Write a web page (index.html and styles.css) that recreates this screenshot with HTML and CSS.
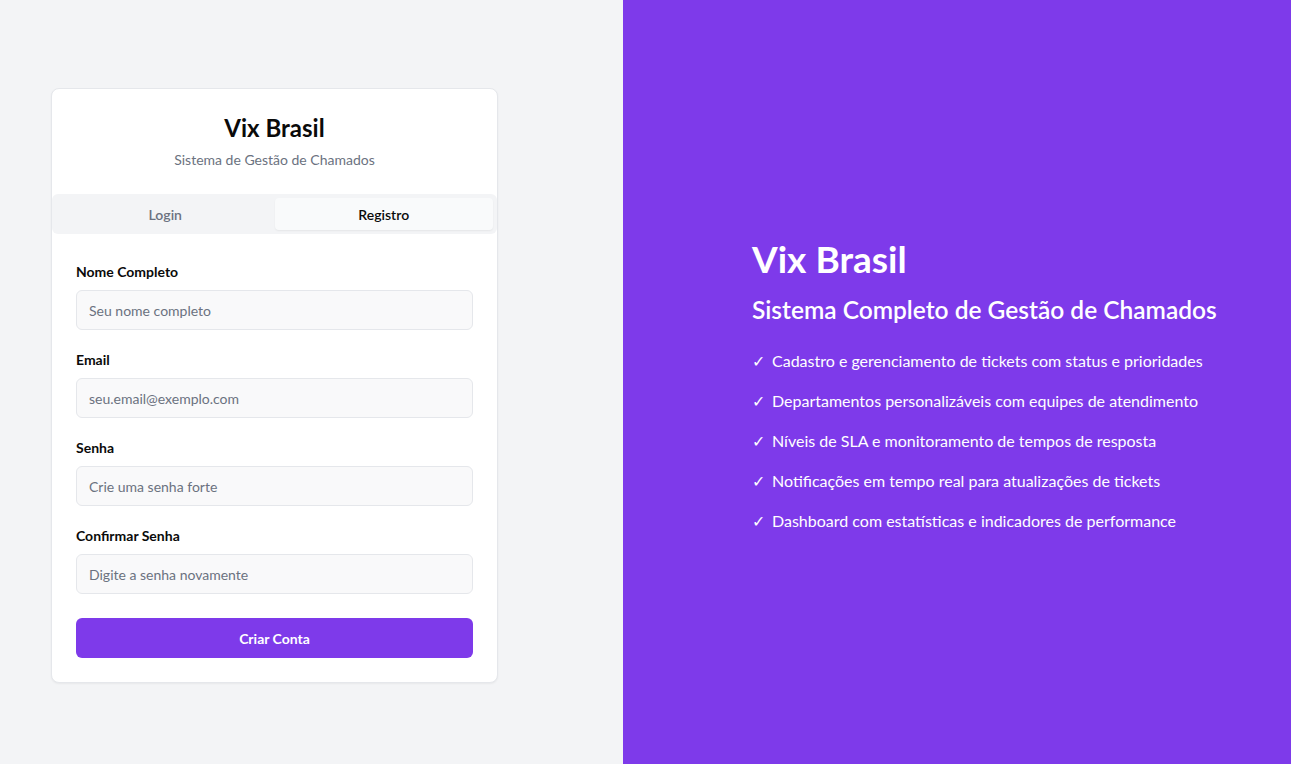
FILE: index.html
```html
<!DOCTYPE html>
<html lang="pt-BR">
<head>
<meta charset="utf-8">
<title>Vix Brasil</title>
<link rel="stylesheet" href="styles.css">
</head>
<body>
<div class="page">
  <section class="left">
    <div class="card">
      <header class="card-header">
        <h1 class="card-title">Vix Brasil</h1>
        <p class="card-subtitle">Sistema de Gestão de Chamados</p>
      </header>
      <div class="tabs">
        <button class="tab">Login</button>
        <button class="tab tab-active">Registro</button>
      </div>
      <form class="form">
        <div class="field">
          <label class="label">Nome Completo</label>
          <input class="input" type="text" placeholder="Seu nome completo">
        </div>
        <div class="field">
          <label class="label">Email</label>
          <input class="input" type="email" placeholder="seu.email@exemplo.com">
        </div>
        <div class="field">
          <label class="label">Senha</label>
          <input class="input" type="password" placeholder="Crie uma senha forte">
        </div>
        <div class="field">
          <label class="label">Confirmar Senha</label>
          <input class="input" type="password" placeholder="Digite a senha novamente">
        </div>
        <button class="submit" type="button">Criar Conta</button>
      </form>
    </div>
  </section>
  <section class="right">
    <div class="hero">
      <h2 class="hero-title">Vix Brasil</h2>
      <h3 class="hero-subtitle">Sistema Completo de Gestão de Chamados</h3>
      <ul class="features">
        <li><span class="check">✓</span>Cadastro e gerenciamento de tickets com status e prioridades</li>
        <li><span class="check">✓</span>Departamentos personalizáveis com equipes de atendimento</li>
        <li><span class="check">✓</span>Níveis de SLA e monitoramento de tempos de resposta</li>
        <li><span class="check">✓</span>Notificações em tempo real para atualizações de tickets</li>
        <li><span class="check">✓</span>Dashboard com estatísticas e indicadores de performance</li>
      </ul>
    </div>
  </section>
</div>
</body>
</html>
```

FILE: styles.css
```css
* { box-sizing: border-box; }
html, body { margin: 0; padding: 0; height: 100%; }
body {
  font-family: "Lato", "Noto Sans", sans-serif;
  color: #0a0a0a;
}
.page {
  display: flex;
  height: 764px;
}
.left {
  width: 623px;
  flex: none;
  background: #f3f4f6;
  display: flex;
  align-items: center;
  padding: 7px 0 0 51px;
}
.card {
  width: 447px;
  background: #ffffff;
  border: 1px solid #e5e7eb;
  border-radius: 8px;
  box-shadow: 0 1px 2px rgba(0,0,0,0.05);
  overflow: hidden;
}
.card-header {
  padding: 23px 24px 24px;
  text-align: center;
}
.card-title {
  margin: 0;
  font-size: 24px;
  line-height: 32px;
  font-weight: 700;
  color: #0a0a0a;
}
.card-subtitle {
  margin: 6px 0 0;
  font-size: 14px;
  line-height: 20px;
  color: #6b7280;
}
.tabs {
  display: grid;
  grid-template-columns: 1fr 1fr;
  padding: 4px;
  background: #f3f4f6;
  border-radius: 6px;
}
.tab {
  height: 32px;
  border: 0;
  background: transparent;
  font-family: inherit;
  font-size: 14px;
  font-weight: 600;
  color: #6b7280;
  border-radius: 4px;
  padding: 0;
}
.tab-active {
  background: #f9fafb;
  color: #0a0a0a;
  box-shadow: 0 1px 2px rgba(0,0,0,0.06);
}
.form {
  display: flex;
  flex-direction: column;
  gap: 20px;
  padding: 28px 24px 24px;
}
.field {
  display: flex;
  flex-direction: column;
  gap: 8px;
}
.label {
  font-size: 14px;
  line-height: 20px;
  font-weight: 700;
  color: #0a0a0a;
}
.input {
  height: 40px;
  border: 1px solid #e5e7eb;
  border-radius: 6px;
  background: #f9f9fa;
  padding: 0 12px;
  font-family: inherit;
  font-size: 14px;
  color: #111827;
  outline: none;
}
.input::placeholder { color: #6b7280; }
.submit {
  margin-top: 4px;
  height: 40px;
  border: 0;
  border-radius: 6px;
  background: #7e3aea;
  color: #ffffff;
  font-family: inherit;
  font-size: 14px;
  font-weight: 700;
}
.right {
  flex: 1;
  background: #7e3aea;
  color: #ffffff;
  display: flex;
  align-items: center;
  padding: 8px 0 0 129px;
}
.hero-title {
  margin: 0;
  font-size: 37px;
  line-height: 40px;
  font-weight: 700;
}
.hero-subtitle {
  margin: 15px 0 0;
  font-size: 24.5px;
  line-height: 32px;
  font-weight: 600;
}
.features {
  list-style: none;
  margin: 23px 0 0;
  padding: 0;
  display: flex;
  flex-direction: column;
  gap: 16px;
}
.features li {
  font-size: 16px;
  line-height: 24px;
  display: flex;
}
.check {
  width: 20px;
  flex: none;
}
```
